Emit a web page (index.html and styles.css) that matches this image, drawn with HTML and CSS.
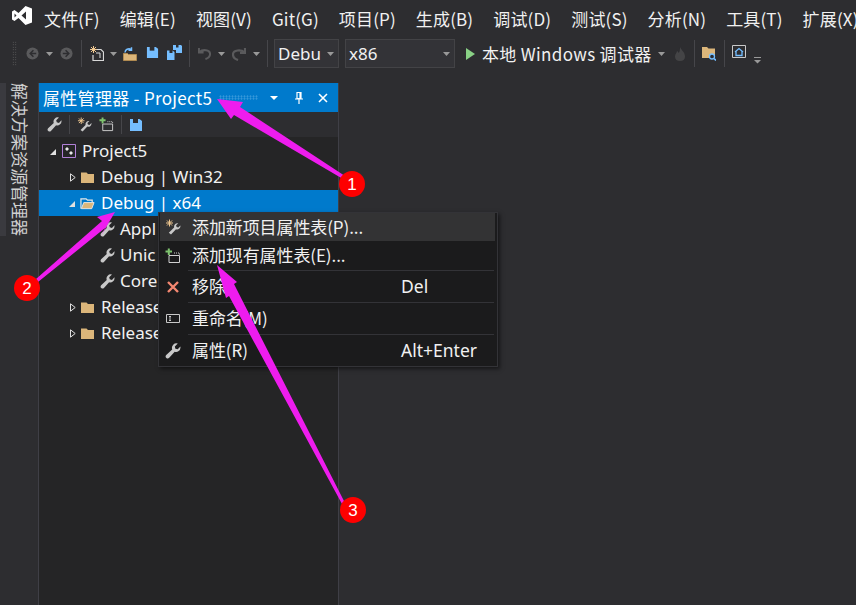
FILE: index.html
```html
<!DOCTYPE html>
<html lang="zh-CN">
<head>
<meta charset="utf-8">
<title>属性管理器</title>
<link rel="stylesheet" href="styles.css">
</head>
<body>
<svg class="defs" width="0" height="0">
  <defs>
    <symbol id="wrench" viewBox="0 0 16 16"><path d="M15.500 4.500a4.500 4.500 0 0 1-5.800 4.300L4.200 14.800a2 2 0 0 1-3-2.700L7.200 6.400A4.500 4.500 0 0 1 12.800.6L9.800 3.400l.6 2.300 2.300.6L15.400 3.500z" fill="#c8c8c8"/></symbol>
    <symbol id="wand" viewBox="0 0 16 16"><path d="M15.500 7a3.400 3.400 0 0 1-4.500 3.200L6 15.500 3.800 13.800l5.300-5.400a3.400 3.400 0 0 1 4.100-4.100l-2.100 2 .5 1.700 1.700.5 2.100-2z" fill="#c8c8c8"/><path d="M4.500 .5v7M1 4h7M2 1.500l5 5M7 1.500l-5 5" stroke="#f0c890" stroke-width="1"/></symbol>
    <symbol id="addsheet" viewBox="0 0 16 16"><path d="M.5 3.500h6.500M3.800 .5v6.500" stroke="#7fc46f" stroke-width="2"/><path d="M4 7.500h10.500v7h-10.500z" fill="none" stroke="#d0d0d0"/><path d="M9 5h5.500v2" fill="none" stroke="#d0d0d0" stroke-dasharray="1 1"/></symbol>
    <symbol id="save" viewBox="0 0 14 14"><path d="M1 1h9.500L13 3v10H1z" fill="#75beff"/><path d="M4 1h5v4H4z" fill="#2d2d30"/></symbol>
    <symbol id="folder" viewBox="0 0 13 11"><path d="M0 .5h5.500L7 2h6v9H0z" fill="#dcb67a"/></symbol>
    <symbol id="folderopen" viewBox="0 0 16 13"><path d="M1 12V1.500h5.500L8 3h5v2" fill="none" stroke="#e8e8e8" stroke-width="1.300"/><path d="M1.500 12L4 5.500h11l-2.500 6.500z" fill="#dcb67a" stroke="#e8e8e8"/></symbol>
    <symbol id="dropdown" viewBox="0 0 7 4"><path d="M0 0h7L3.500 4z" fill="#999"/></symbol>
    <symbol id="twclosed" viewBox="0 0 6 9"><path d="M.5 .8L5.200 4.500.5 8.200z" fill="none" stroke="#e0e0e0"/></symbol>
    <symbol id="twopen" viewBox="0 0 6 6"><path d="M6 0v6H0z" fill="#e0e0e0"/></symbol>
  </defs>
</svg>

<div class="app">
  <header class="menubar">
    <svg class="vslogo" viewBox="0 0 20 19"><path d="M13.500 0L20 2.500V16.500L13.500 19 6.500 12 2.500 15 0 13.500V5.500L2.500 4 6.500 7zM14 5.500L9.500 9.500 14 13.500zM2.500 7.500V11.500L4.500 9.500z" fill="#fff" fill-rule="evenodd"/></svg>
    <nav class="menus">
      <span>文件(F)</span><span>编辑(E)</span><span>视图(V)</span><span>Git(G)</span><span>项目(P)</span><span>生成(B)</span><span>调试(D)</span><span>测试(S)</span><span>分析(N)</span><span>工具(T)</span><span>扩展(X)</span>
    </nav>
  </header>

  <div class="toolbar">
    <i class="grip"></i>
    <svg class="tool t-nav" viewBox="0 0 14 14"><circle cx="7" cy="7" r="6.500" fill="#5a5a5c"/><path d="M8 3.500L4.500 7 8 10.500M4.500 7H11" fill="none" stroke="#2d2d30" stroke-width="1.600"/></svg>
    <svg class="drop t-d1"><use href="#dropdown"/></svg>
    <svg class="tool t-nav2" viewBox="0 0 14 14"><circle cx="7" cy="7" r="6.500" fill="#5a5a5c"/><path d="M6 3.500L9.500 7 6 10.500M9.500 7H3" fill="none" stroke="#2d2d30" stroke-width="1.600"/></svg>
    <i class="sep s1"></i>
    <svg class="tool t-new" viewBox="0 0 14 15"><path d="M5 3.500h6l2.500 2.500v8.500H3V9" fill="none" stroke="#d8d8d8" stroke-width="1.200"/><path d="M6 7h4v5" fill="none" stroke="#d8d8d8"/><path d="M3.500 0v7M0 3.500h7M1 1l5 5M6 1L1 6" stroke="#f0c890"/></svg>
    <svg class="drop t-d2"><use href="#dropdown"/></svg>
    <svg class="tool t-open" viewBox="0 0 14 14"><path d="M.5 13.500V6.500h4l1 1h8v6z" fill="#dcb67a" stroke="#b08a50"/><path d="M2 5.500a4 4 0 0 1 6-3.200M8.500 .3v3h-3" fill="none" stroke="#75beff" stroke-width="1.500"/></svg>
    <svg class="tool t-save"><use href="#save"/></svg>
    <svg class="tool t-saveall" viewBox="0 0 15 15"><path d="M6 0h3v2.500h2.500V0h2.500l1 1v7H9V5H6z" fill="#75beff"/><path d="M0 5.500h2.500v2.500h3V5.500L7.500 7v8H0z" fill="#75beff"/></svg>
    <i class="sep s2"></i>
    <svg class="tool t-undo" viewBox="0 0 14 14"><path d="M1 1v5h5M1.500 5.500C5 2 13 3 13 7.500c0 2.500-2 4.500-5 5.500" fill="none" stroke="#5a5a5c" stroke-width="2.200"/></svg>
    <svg class="drop t-d3"><use href="#dropdown"/></svg>
    <svg class="tool t-redo" viewBox="0 0 14 14"><path d="M13 1v5H8M12.500 5.500C9 2 1 3 1 7.500c0 2.500 2 4.500 5 5.500" fill="none" stroke="#5a5a5c" stroke-width="2.200"/></svg>
    <svg class="drop t-d4"><use href="#dropdown"/></svg>
    <i class="sep s3"></i>
    <div class="combo c-config"><span>Debu</span><svg class="drop"><use href="#dropdown"/></svg></div>
    <div class="combo c-plat"><span>x86</span><svg class="drop"><use href="#dropdown"/></svg></div>
    <svg class="play" viewBox="0 0 9 12"><path d="M0 0l9 6-9 6z" fill="#89d185"/></svg>
    <span class="debugger">本地 Windows 调试器</span>
    <svg class="drop t-d5"><use href="#dropdown"/></svg>
    <svg class="tool t-flame" viewBox="0 0 12 16"><path d="M6 1c1 3 5 5 5 9.500C11 13.500 9 15 6 15s-5-1.500-5-4.500C1 8 3 7 3 5c1 .5 1.500 1.500 1.500 2C6 6 6 3 6 1z" fill="#444446"/></svg>
    <i class="sep s4"></i>
    <svg class="tool t-find" viewBox="0 0 14 14"><path d="M0 0h5l1.500 1.500H13V11H0z" fill="#dcb67a"/><circle cx="10" cy="9.500" r="2.500" fill="#2d2d30" stroke="#75beff" stroke-width="1.300"/><path d="M12 11.500l2 2" stroke="#75beff" stroke-width="1.600"/></svg>
    <i class="sep s5"></i>
    <svg class="tool t-home" viewBox="0 0 14 13"><path d="M.5 .5h13v12H.5z" fill="none" stroke="#c8c8c8"/><path d="M3 7l4-3.500L11 7M4 6.500V10.500h6V6.500" fill="none" stroke="#75beff" stroke-width="1.300"/></svg>
    <svg class="overflow" viewBox="0 0 7 7"><path d="M0 .5h7" stroke="#999"/><path d="M0 3h7L3.500 6.500z" fill="#999"/></svg>
  </div>

  <main class="workspace">
    <aside class="sidetab"><span>解决方案资源管理器</span></aside>
    <section class="panel">
      <div class="panel-title">
        <span class="panel-name">属性管理器 - Project5</span>
        <i class="dots"></i>
        <svg class="tb-drop" viewBox="0 0 8 4"><path d="M0 0h8L4 4z" fill="#fff"/></svg>
        <svg class="title-btn tb-pin" viewBox="0 0 10 12"><path d="M3 .500h4v6H3zM1 7h8M5 7v5M6 1v5" fill="none" stroke="#fff" stroke-width="1.200"/></svg>
        <svg class="title-btn tb-x" viewBox="0 0 10 10"><path d="M1 1l8 8M9 1L1 9" stroke="#fff" stroke-width="1.600"/></svg>
      </div>
      <div class="panel-tools">
        <svg class="ptool"><use href="#wrench"/></svg>
        <i class="psep"></i>
        <svg class="ptool"><use href="#wand"/></svg>
        <svg class="ptool"><use href="#addsheet"/></svg>
        <i class="psep"></i>
        <svg class="ptool psave"><use href="#save"/></svg>
      </div>
      <ul class="tree">
        <li class="row lv0"><svg class="tw op"><use href="#twopen"/></svg><svg class="ico" viewBox="0 0 14 14"><path d="M.5.500h13v13H.5z" fill="none" stroke="#b180d7"/><path d="M3 5l2-2 2 2-2 2zM7 9l2-2 2 2-2 2z" fill="#e8e8e8"/></svg><span>Project5</span></li>
        <li class="row lv1"><svg class="tw"><use href="#twclosed"/></svg><svg class="ico"><use href="#folder"/></svg><span>Debug | Win32</span></li>
        <li class="row lv1 sel"><svg class="tw op"><use href="#twopen"/></svg><svg class="ico"><use href="#folderopen"/></svg><span>Debug | x64</span></li>
        <li class="row lv2"><svg class="ico"><use href="#wrench"/></svg><span>Appl</span></li>
        <li class="row lv2"><svg class="ico"><use href="#wrench"/></svg><span>Unic</span></li>
        <li class="row lv2"><svg class="ico"><use href="#wrench"/></svg><span>Core</span></li>
        <li class="row lv1"><svg class="tw"><use href="#twclosed"/></svg><svg class="ico"><use href="#folder"/></svg><span>Release</span></li>
        <li class="row lv1"><svg class="tw"><use href="#twclosed"/></svg><svg class="ico"><use href="#folder"/></svg><span>Release</span></li>
      </ul>
    </section>
    <div class="editor"></div>
  </main>

  <div class="ctx">
    <div class="ctx-item hot"><svg class="ctx-ico"><use href="#wand"/></svg><span class="ctx-label">添加新项目属性表(P)...</span></div>
    <div class="ctx-item second"><svg class="ctx-ico"><use href="#addsheet"/></svg><span class="ctx-label">添加现有属性表(E)...</span></div>
    <div class="ctx-sep"></div>
    <div class="ctx-item"><svg class="ctx-ico" viewBox="0 0 16 16"><path d="M3 3l10 10M13 3L3 13" stroke="#f48771" stroke-width="2.400"/></svg><span class="ctx-label">移除</span><span class="ctx-key">Del</span></div>
    <div class="ctx-sep"></div>
    <div class="ctx-item"><svg class="ctx-ico" viewBox="0 0 16 16"><path d="M1.500 3.500h13v8h-13z" fill="none" stroke="#c8c8c8"/><path d="M4 5.500h2M4 9.500h2M5 5.500v4" stroke="#c8c8c8"/></svg><span class="ctx-label">重命名(M)</span></div>
    <div class="ctx-sep"></div>
    <div class="ctx-item"><svg class="ctx-ico"><use href="#wrench"/></svg><span class="ctx-label">属性(R)</span><span class="ctx-key">Alt+Enter</span></div>
  </div>

  <svg class="notes" viewBox="0 0 856 605">
    <path d="M217 99L243 102L240 107L345 176L343 179L234 115L231 119Z" class="arrow"/>
    <path d="M115 212L97 217L102 221L36 279L38 282L105 228L101 236Z" class="arrow"/>
    <path d="M217 265L237 282L234 284L345 503L342 504L229 296L226 298Z" class="arrow"/>
    <circle cx="352" cy="184" r="13" class="badge"/>
    <circle cx="27" cy="288" r="13" class="badge"/>
    <circle cx="353" cy="510" r="13" class="badge"/>
    <text x="352" y="190" class="num">1</text>
    <text x="27" y="294" class="num">2</text>
    <text x="353" y="516" class="num">3</text>
  </svg>
</div>
</body>
</html>
```

FILE: styles.css
```css
* { box-sizing: border-box; }
html, body { margin: 0; padding: 0; }
body {
  width: 856px;
  height: 605px;
  overflow: hidden;
  background: #2d2d30;
  color: #f1f1f1;
  font-family: "Noto Sans", "Noto Sans CJK SC", sans-serif;
  font-size: 16px;
}
.defs { position: absolute; }
.app { position: relative; width: 856px; height: 605px; display: flex; flex-direction: column; overflow: hidden; }

.menubar { height: 37px; display: flex; align-items: center; padding-left: 12px; flex: none; }
.vslogo { width: 20px; height: 19px; flex: none; margin-top: -6px; }
.menus { display: flex; gap: 20px; margin-left: 12px; white-space: nowrap; margin-top: -1px; font-size: 17px; letter-spacing: .15px; font-family: "Noto Sans CJK SC", "Noto Sans", sans-serif; }

.toolbar { height: 35px; display: flex; align-items: center; flex: none; padding-left: 12px; white-space: nowrap; margin-top: -1px; }
.grip { width: 5px; height: 25px; flex: none; background-image: radial-gradient(#666 40%, transparent 45%); background-size: 2.500px 2.500px; }
.tool { width: 13px; height: 13px; flex: none; }
.drop { width: 7px; height: 4px; flex: none; }
.sep { width: 1px; height: 27px; background: #46464a; flex: none; }
.t-nav { margin-left: 9px; }
.t-d1 { margin-left: 7px; }
.t-nav2 { margin-left: 7px; }
.s1 { margin-left: 8px; }
.t-new { margin-left: 8px; width: 14px; height: 15px; }
.t-d2 { margin-left: 6px; }
.t-open { margin-left: 6px; width: 14px; height: 14px; }
.t-save { margin-left: 9px; margin-top: -3px; }
.t-saveall { margin-left: 8px; width: 15px; height: 15px; margin-top: -3px; }
.s2 { margin-left: 7px; }
.t-undo { margin-left: 8px; }
.t-d3 { margin-left: 7px; }
.t-redo { margin-left: 7px; width: 14px; height: 14px; }
.t-d4 { margin-left: 7px; }
.s3 { margin-left: 7px; }
.combo { height: 29px; border: 1px solid #434346; background: #333337; display: flex; align-items: center; justify-content: space-between; padding: 0 4px 0 3px; font-size: 17px; flex: none; }
.c-config { width: 65px; margin-left: 6px; }
.c-plat { width: 110px; margin-left: 6px; }
.play { width: 9px; height: 12px; margin-left: 11px; flex: none; }
.debugger { margin-left: 7px; font-size: 17px; letter-spacing: .33px; font-family: "Noto Sans CJK SC", "Noto Sans", sans-serif; }
.t-d5 { margin-left: 6px; }
.t-flame { margin-left: 9px; width: 12px; height: 16px; }
.s4 { margin-left: 8px; }
.t-find { margin-left: 7px; width: 14px; height: 14px; }
.s5 { margin-left: 8px; }
.t-home { margin-left: 7px; width: 14px; height: 13px; margin-top: -4px; }
.overflow { width: 7px; height: 7px; margin-left: 8px; margin-top: 14px; flex: none; }

.workspace { flex: 1; display: flex; min-height: 0; margin-top: 12px; }
.sidetab { width: 38px; flex: none; display: flex; align-items: flex-start; }
.sidetab span { writing-mode: vertical-rl; text-orientation: sideways; font-size: 17px; line-height: 22px; margin-left: 9px; color: #d0d0d0; white-space: nowrap; font-family: "Noto Sans CJK SC", sans-serif; }
.sidetab::before { content: ""; position: absolute; left: 0; width: 6px; height: 153px; background: #3a3a3f; }
.panel { width: 301px; flex: none; display: flex; flex-direction: column; border-left: 1px solid #3f3f46; border-right: 1px solid #3f3f46; background: #252526; }
.panel-title { height: 29px; background: #007acc; display: flex; align-items: center; padding: 0 10px 0 4px; flex: none; }
.panel-name { font-size: 17px; letter-spacing: .3px; white-space: nowrap; color: #fff; font-family: "Noto Sans CJK SC", "Noto Sans", sans-serif; }
.dots { width: 39px; height: 5px; margin-left: 7px; margin-right: auto; flex: none; background-image: radial-gradient(#3b9bdc 45%, transparent 50%); background-size: 3px 2.500px; }
.title-btn { width: 10px; height: 12px; flex: none; }
.tb-drop { width: 8px; height: 4px; flex: none; }
.tb-pin { margin-left: 16px; }
.tb-x { margin-left: 14px; }
.panel-tools { height: 25px; background: #2d2d30; display: flex; align-items: center; padding-left: 8px; flex: none; }
.ptool { width: 15px; height: 15px; flex: none; margin-right: 7px; }
.psave { width: 14px; height: 14px; }
.psep { width: 1px; height: 19px; background: #46464a; margin-right: 7px; flex: none; }
.tree { list-style: none; margin: 1px 0 0; padding: 0; flex: 1; }
.row { height: 26px; display: flex; align-items: center; font-size: 17px; white-space: nowrap; }
.row span { margin-top: -2px; }
.lv0 { padding-left: 11px; }
.lv1 { padding-left: 31px; }
.lv2 { padding-left: 61px; }
.sel { background: #007acc; color: #fff; padding-left: 30px; }
.tw { width: 6px; height: 9px; flex: none; margin-right: 5px; }
.tw.op { height: 6px; margin-top: 1px; }
.lv0 .tw { margin-right: 6px; }
.ico { width: 14px; height: 14px; flex: none; margin-right: 6px; }
.lv1 .ico { width: 13px; height: 11px; margin-right: 7px; }
.lv1.sel .ico { width: 15px; height: 13px; margin-right: 6px; }
.lv2 .ico { width: 15px; height: 15px; margin-right: 5px; }
.editor { flex: 1; background: #2d2d30; }

.ctx { position: absolute; left: 158px; top: 212px; width: 340px; height: 155px; background: #1b1b1c; border: 1px solid #333337; box-shadow: 2px 2px 4px rgba(0,0,0,.5); }
.ctx-item { height: 31px; display: flex; align-items: center; padding-left: 6px; font-size: 17px; letter-spacing: -.1px; font-family: "Noto Sans CJK SC", "Noto Sans", sans-serif; }
.hot { height: 28px; background: #333334; margin: 0 2px 0 1px; padding-left: 5px; }
.second { height: 29px; }
.ctx-ico { width: 16px; height: 16px; flex: none; }
.ctx-label { margin-left: 11px; width: 209px; white-space: nowrap; margin-top: -2px; }
.ctx-key { white-space: nowrap; font-size: 17.5px; letter-spacing: 0; margin-top: -2px; font-family: "Noto Sans", sans-serif; }
.ctx-sep { height: 1px; margin-left: 29px; margin-right: 3px; background: #333337; }

.notes { position: absolute; inset: 0; width: 856px; height: 605px; pointer-events: none; }
.arrow { fill: #ee1cee; }
.badge { fill: #fe0000; }
.num { font: 17px "Liberation Sans", sans-serif; fill: #fff; text-anchor: middle; }
```
